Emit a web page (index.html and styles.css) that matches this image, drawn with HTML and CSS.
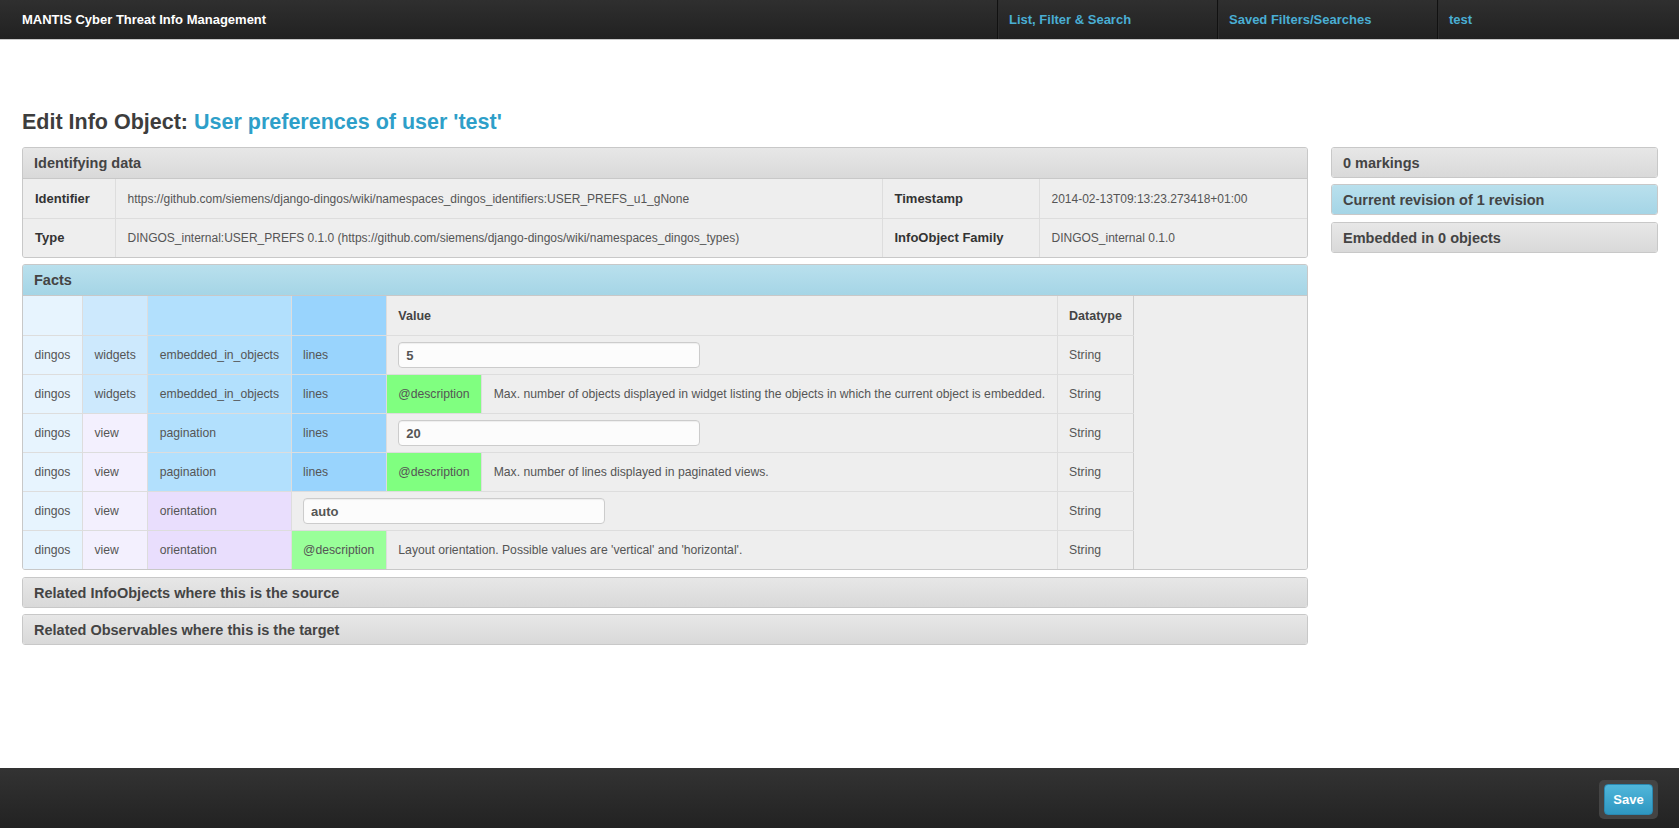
FILE: index.html
```html
<!DOCTYPE html>
<html lang="en">
<head>
<meta charset="utf-8">
<title>MANTIS - Edit Info Object</title>
<link rel="stylesheet" href="styles.css">
</head>
<body>
<header class="navbar">
  <span class="brand">MANTIS Cyber Threat Info Management</span>
  <nav class="nav">
    <a class="nav-item" href="#">List, Filter &amp; Search</a>
    <a class="nav-item" href="#">Saved Filters/Searches</a>
    <a class="nav-item" href="#">test</a>
  </nav>
</header>

<main class="page">
  <h3 class="title">Edit Info Object: <span class="title-link">User preferences of user 'test'</span></h3>
  <div class="layout">
    <div class="main-col">
      <section class="panel">
        <div class="panel-head">Identifying data</div>
        <div class="panel-body">
          <table class="ident">
            <colgroup>
              <col class="w-label1"><col class="w-val1"><col class="w-label2"><col>
            </colgroup>
            <tr>
              <th>Identifier</th>
              <td>https://github.com/siemens/django-dingos/wiki/namespaces_dingos_identifiers:USER_PREFS_u1_gNone</td>
              <th>Timestamp</th>
              <td>2014-02-13T09:13:23.273418+01:00</td>
            </tr>
            <tr>
              <th>Type</th>
              <td>DINGOS_internal:USER_PREFS 0.1.0 (https://github.com/siemens/django-dingos/wiki/namespaces_dingos_types)</td>
              <th>InfoObject Family</th>
              <td>DINGOS_internal 0.1.0</td>
            </tr>
          </table>
        </div>
      </section>

      <section class="panel panel-info">
        <div class="panel-head">Facts</div>
        <div class="panel-body">
          <table class="facts">
            <tr>
              <td class="c1"></td>
              <td class="c2w"></td>
              <td class="c3e"></td>
              <td class="c4"></td>
              <th colspan="2">Value</th>
              <th>Datatype</th>
            </tr>
            <tr>
              <td class="c1">dingos</td>
              <td class="c2w">widgets</td>
              <td class="c3e">embedded_in_objects</td>
              <td class="c4">lines</td>
              <td class="input-cell" colspan="2"><input class="field" type="text" value="5"></td>
              <td>String</td>
            </tr>
            <tr>
              <td class="c1">dingos</td>
              <td class="c2w">widgets</td>
              <td class="c3e">embedded_in_objects</td>
              <td class="c4">lines</td>
              <td class="desc">@description</td>
              <td>Max. number of objects displayed in widget listing the objects in which the current object is embedded.</td>
              <td>String</td>
            </tr>
            <tr>
              <td class="c1">dingos</td>
              <td class="c2v">view</td>
              <td class="c3e">pagination</td>
              <td class="c4">lines</td>
              <td class="input-cell" colspan="2"><input class="field" type="text" value="20"></td>
              <td>String</td>
            </tr>
            <tr>
              <td class="c1">dingos</td>
              <td class="c2v">view</td>
              <td class="c3e">pagination</td>
              <td class="c4">lines</td>
              <td class="desc">@description</td>
              <td>Max. number of lines displayed in paginated views.</td>
              <td>String</td>
            </tr>
            <tr>
              <td class="c1">dingos</td>
              <td class="c2v">view</td>
              <td class="c3o">orientation</td>
              <td class="input-cell" colspan="3"><input class="field" type="text" value="auto"></td>
              <td>String</td>
            </tr>
            <tr>
              <td class="c1">dingos</td>
              <td class="c2v">view</td>
              <td class="c3o">orientation</td>
              <td class="desc2">@description</td>
              <td colspan="2">Layout orientation. Possible values are 'vertical' and 'horizontal'.</td>
              <td>String</td>
            </tr>
          </table>
        </div>
      </section>

      <section class="panel panel-collapsed">
        <div class="panel-head">Related InfoObjects where this is the source</div>
      </section>
      <section class="panel panel-collapsed">
        <div class="panel-head">Related Observables where this is the target</div>
      </section>
    </div>

    <aside class="side-col">
      <section class="panel panel-collapsed">
        <div class="panel-head">0 markings</div>
      </section>
      <section class="panel panel-info panel-collapsed">
        <div class="panel-head">Current revision of 1 revision</div>
      </section>
      <section class="panel panel-collapsed">
        <div class="panel-head">Embedded in 0 objects</div>
      </section>
    </aside>
  </div>
</main>

<footer class="footer">
  <div class="save-wrap"><button class="btn-save" type="button">Save</button></div>
</footer>
</body>
</html>
```

FILE: styles.css
```css
html, body {
  margin: 0;
  padding: 0;
}

body {
  font-family: "Liberation Sans", Arial, sans-serif;
  color: #333;
  background: #fff;
  min-height: 100vh;
  display: flex;
  flex-direction: column;
}

/* ---------- top navbar ---------- */
.navbar {
  height: 39px;
  display: flex;
  align-items: center;
  padding: 0 22px;
  background: linear-gradient(#2f2f2f, #212121);
  box-shadow: 0 1px 0 #c9c9c9;
  flex: none;
}

.brand {
  flex: 1;
  font-size: 13px;
  font-weight: bold;
  color: #fff;
}

.nav {
  display: flex;
  align-self: stretch;
}

.nav-item {
  width: 220px;
  box-sizing: border-box;
  display: flex;
  align-items: center;
  padding-left: 11px;
  border-left: 1px solid #111;
  box-shadow: inset 1px 0 0 #2c2c2c;
  font-size: 13px;
  font-weight: bold;
  color: #4aaed4;
  text-decoration: none;
}

/* ---------- page ---------- */
.page {
  flex: 1;
  padding: 0 21px 0 22px;
}

.title {
  margin: 69px 0 10.5px;
  font-size: 21.5px;
  line-height: 28px;
  font-weight: bold;
  color: #3d3d3d;
}

.title-link {
  color: #2e9fc9;
}

.layout {
  display: grid;
  grid-template-columns: 1fr 327px;
  gap: 23px;
  align-items: start;
}

/* ---------- panels ---------- */
.panel {
  border: 1px solid #c8c8c8;
  border-radius: 3px;
  margin-bottom: 6.5px;
  background: #eee;
  overflow: hidden;
}

.panel-head {
  height: 30px;
  line-height: 31px;
  padding: 0 11px;
  font-size: 14.5px;
  font-weight: bold;
  color: #444;
  background: linear-gradient(#e7e7e7, #d9d9d9);
}

.panel-collapsed > .panel-head {
  height: 29px;
  line-height: 30px;
}

.panel-info > .panel-head {
  background: linear-gradient(#b9e0ed, #a5d5e6);
}

.panel-body {
  border-top: 1px solid #c8c8c8;
  background: #eee;
}

/* ---------- identifying table ---------- */
.ident {
  width: 100%;
  border-collapse: collapse;
  table-layout: fixed;
}

.w-label1 { width: 92px; }
.w-val1 { width: 767px; }
.w-label2 { width: 157px; }

.ident th,
.ident td {
  padding: 10px 12px;
  line-height: 18px;
  text-align: left;
  border-top: 1px solid #ddd;
  border-left: 1px solid #ddd;
  white-space: nowrap;
}

.ident tr:first-child th,
.ident tr:first-child td {
  border-top: 0;
  padding-top: 11px;
}

.ident th:first-child {
  border-left: 0;
}

.ident th {
  font-size: 13px;
  font-weight: bold;
  color: #333;
}

.ident td {
  font-size: 12px;
  color: #555;
}

/* ---------- facts table ---------- */
.facts {
  border-collapse: collapse;
  border-right: 1px solid #cfcfcf;
  white-space: nowrap;
}

.facts th,
.facts td {
  padding: 10px 11.5px;
  line-height: 18px;
  text-align: left;
  border-top: 1px solid #ddd;
  border-left: 1px solid #ddd;
  font-size: 12.2px;
  color: #555;
}

.facts tr:first-child th,
.facts tr:first-child td {
  border-top: 0;
  padding-top: 11px;
}

.facts tr > :first-child {
  border-left: 0;
}

.facts th {
  font-size: 12.5px;
  font-weight: bold;
  color: #444;
}

.facts .input-cell {
  padding-top: 6px;
  padding-bottom: 6px;
}

.c1 { background: #e7f4fe; }
.c2w { background: #cde9fd; }
.c2v { background: #f3f0fe; }
.c3e { background: #b2e0fd; }
.c3o { background: #e9defd; }
.c4 { background: #99d4fd; }
.desc { background: #80ff80; }
.desc2 { background: #99ff99; }

.field {
  display: block;
  width: 302px;
  height: 26px;
  box-sizing: border-box;
  margin: 0;
  padding: 0 7px;
  border: 1px solid #ccc;
  border-radius: 4px;
  background: #fcfcfc;
  box-shadow: inset 0 1px 1px rgba(0, 0, 0, 0.06);
  font-family: "Liberation Sans", Arial, sans-serif;
  font-size: 13px;
  font-weight: bold;
  color: #555;
}

/* ---------- footer ---------- */
.footer {
  flex: none;
  height: 60px;
  box-sizing: border-box;
  display: flex;
  justify-content: flex-end;
  align-items: flex-start;
  padding: 12px 21px 0;
  background: linear-gradient(#333, #222);
}

.save-wrap {
  background: #444;
  border-radius: 5px;
  padding: 4px 5px;
}

.btn-save {
  display: block;
  width: 49px;
  height: 31px;
  padding: 0;
  border: 1px solid #2a88b0;
  border-radius: 4px;
  background: linear-gradient(#50b6da, #2e97c1);
  color: #fff;
  font-family: "Liberation Sans", Arial, sans-serif;
  font-size: 13px;
  font-weight: bold;
}
```
